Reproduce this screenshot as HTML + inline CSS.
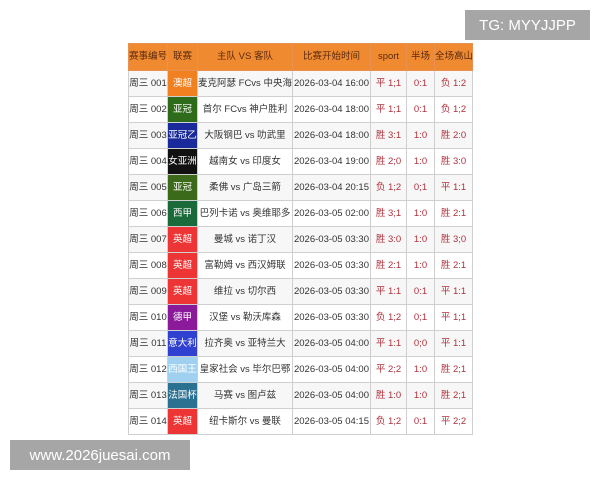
<!DOCTYPE html>
<html><head><meta charset="utf-8"><style>
body{margin:0;width:600px;height:480px;background:#fff;position:relative;overflow:hidden;font-family:"Liberation Sans","Noto Sans CJK SC",sans-serif}
table{position:absolute;left:128px;top:43px;width:344px;border-collapse:collapse;table-layout:fixed;font-size:9.5px;color:#333}
td,th{border:1px solid #cfcfcf;padding:0;text-align:center;white-space:nowrap;overflow:hidden;height:25px;line-height:25px;vertical-align:middle}
th{background:#f08a30;color:#5a2a10;font-weight:normal;height:26px;line-height:26px;border-color:#e89050}
tr:nth-child(even) td{background:#f7f7f7}
td.l{color:#fff}
.r{color:#b0303a}
.box{position:absolute;background:#a6a6a6;color:#fff;font-size:15px;display:flex;align-items:center;justify-content:center}
</style></head><body>
<div class="box" style="left:465px;top:10px;width:125px;height:30px">TG: MYYJJPP</div>
<table>
<colgroup><col style="width:39px"><col style="width:30px"><col style="width:95px"><col style="width:78px"><col style="width:36px"><col style="width:28px"><col style="width:38px"></colgroup>
<tr><th>赛事编号</th><th>联赛</th><th>主队 VS 客队</th><th>比赛开始时间</th><th>sport</th><th>半场</th><th>全场高山</th></tr>
<tr><td>周三 001</td><td class="l" style="background:#f08020">澳超</td><td>麦克阿瑟 FCvs 中央海岸</td><td>2026-03-04 16:00</td><td class="r">平 1;1</td><td class="r">0:1</td><td class="r">负 1:2</td></tr>
<tr><td>周三 002</td><td class="l" style="background:#2e6b1a">亚冠</td><td>首尔 FCvs 神户胜利</td><td>2026-03-04 18:00</td><td class="r">平 1;1</td><td class="r">0:1</td><td class="r">负 1;2</td></tr>
<tr><td>周三 003</td><td class="l" style="background:#1a2a9a">亚冠乙</td><td>大阪钢巴 vs 叻武里</td><td>2026-03-04 18:00</td><td class="r">胜 3:1</td><td class="r">1:0</td><td class="r">胜 2:0</td></tr>
<tr><td>周三 004</td><td class="l" style="background:#111">女亚洲</td><td>越南女 vs 印度女</td><td>2026-03-04 19:00</td><td class="r">胜 2;0</td><td class="r">1:0</td><td class="r">胜 3:0</td></tr>
<tr><td>周三 005</td><td class="l" style="background:#3a6a1a">亚冠</td><td>柔佛 vs 广岛三箭</td><td>2026-03-04 20:15</td><td class="r">负 1;2</td><td class="r">0;1</td><td class="r">平 1:1</td></tr>
<tr><td>周三 006</td><td class="l" style="background:#1a6a3a">西甲</td><td>巴列卡诺 vs 奥维耶多</td><td>2026-03-05 02:00</td><td class="r">胜 3;1</td><td class="r">1:0</td><td class="r">胜 2:1</td></tr>
<tr><td>周三 007</td><td class="l" style="background:#ee3535">英超</td><td>曼城 vs 诺丁汉</td><td>2026-03-05 03:30</td><td class="r">胜 3:0</td><td class="r">1:0</td><td class="r">胜 3;0</td></tr>
<tr><td>周三 008</td><td class="l" style="background:#ee3535">英超</td><td>富勒姆 vs 西汉姆联</td><td>2026-03-05 03:30</td><td class="r">胜 2:1</td><td class="r">1:0</td><td class="r">胜 2:1</td></tr>
<tr><td>周三 009</td><td class="l" style="background:#ee3535">英超</td><td>维拉 vs 切尔西</td><td>2026-03-05 03:30</td><td class="r">平 1:1</td><td class="r">0:1</td><td class="r">平 1:1</td></tr>
<tr><td>周三 010</td><td class="l" style="background:#8a1a9a">德甲</td><td>汉堡 vs 勒沃库森</td><td>2026-03-05 03:30</td><td class="r">负 1;2</td><td class="r">0;1</td><td class="r">平 1;1</td></tr>
<tr><td>周三 011</td><td class="l" style="background:#3040d0">意大利</td><td>拉齐奥 vs 亚特兰大</td><td>2026-03-05 04:00</td><td class="r">平 1:1</td><td class="r">0;0</td><td class="r">平 1:1</td></tr>
<tr><td>周三 012</td><td class="l" style="background:#a0d0f0">西国王</td><td>皇家社会 vs 毕尔巴鄂</td><td>2026-03-05 04:00</td><td class="r">平 2;2</td><td class="r">1:0</td><td class="r">胜 2;1</td></tr>
<tr><td>周三 013</td><td class="l" style="background:#2a7090">法国杯</td><td>马赛 vs 图卢兹</td><td>2026-03-05 04:00</td><td class="r">胜 1:0</td><td class="r">1:0</td><td class="r">胜 2;1</td></tr>
<tr><td>周三 014</td><td class="l" style="background:#ee3535">英超</td><td>纽卡斯尔 vs 曼联</td><td>2026-03-05 04:15</td><td class="r">负 1;2</td><td class="r">0:1</td><td class="r">平 2;2</td></tr>
</table>
<div class="box" style="left:10px;top:440px;width:180px;height:30px">www.2026juesai.com</div>
</body></html>
